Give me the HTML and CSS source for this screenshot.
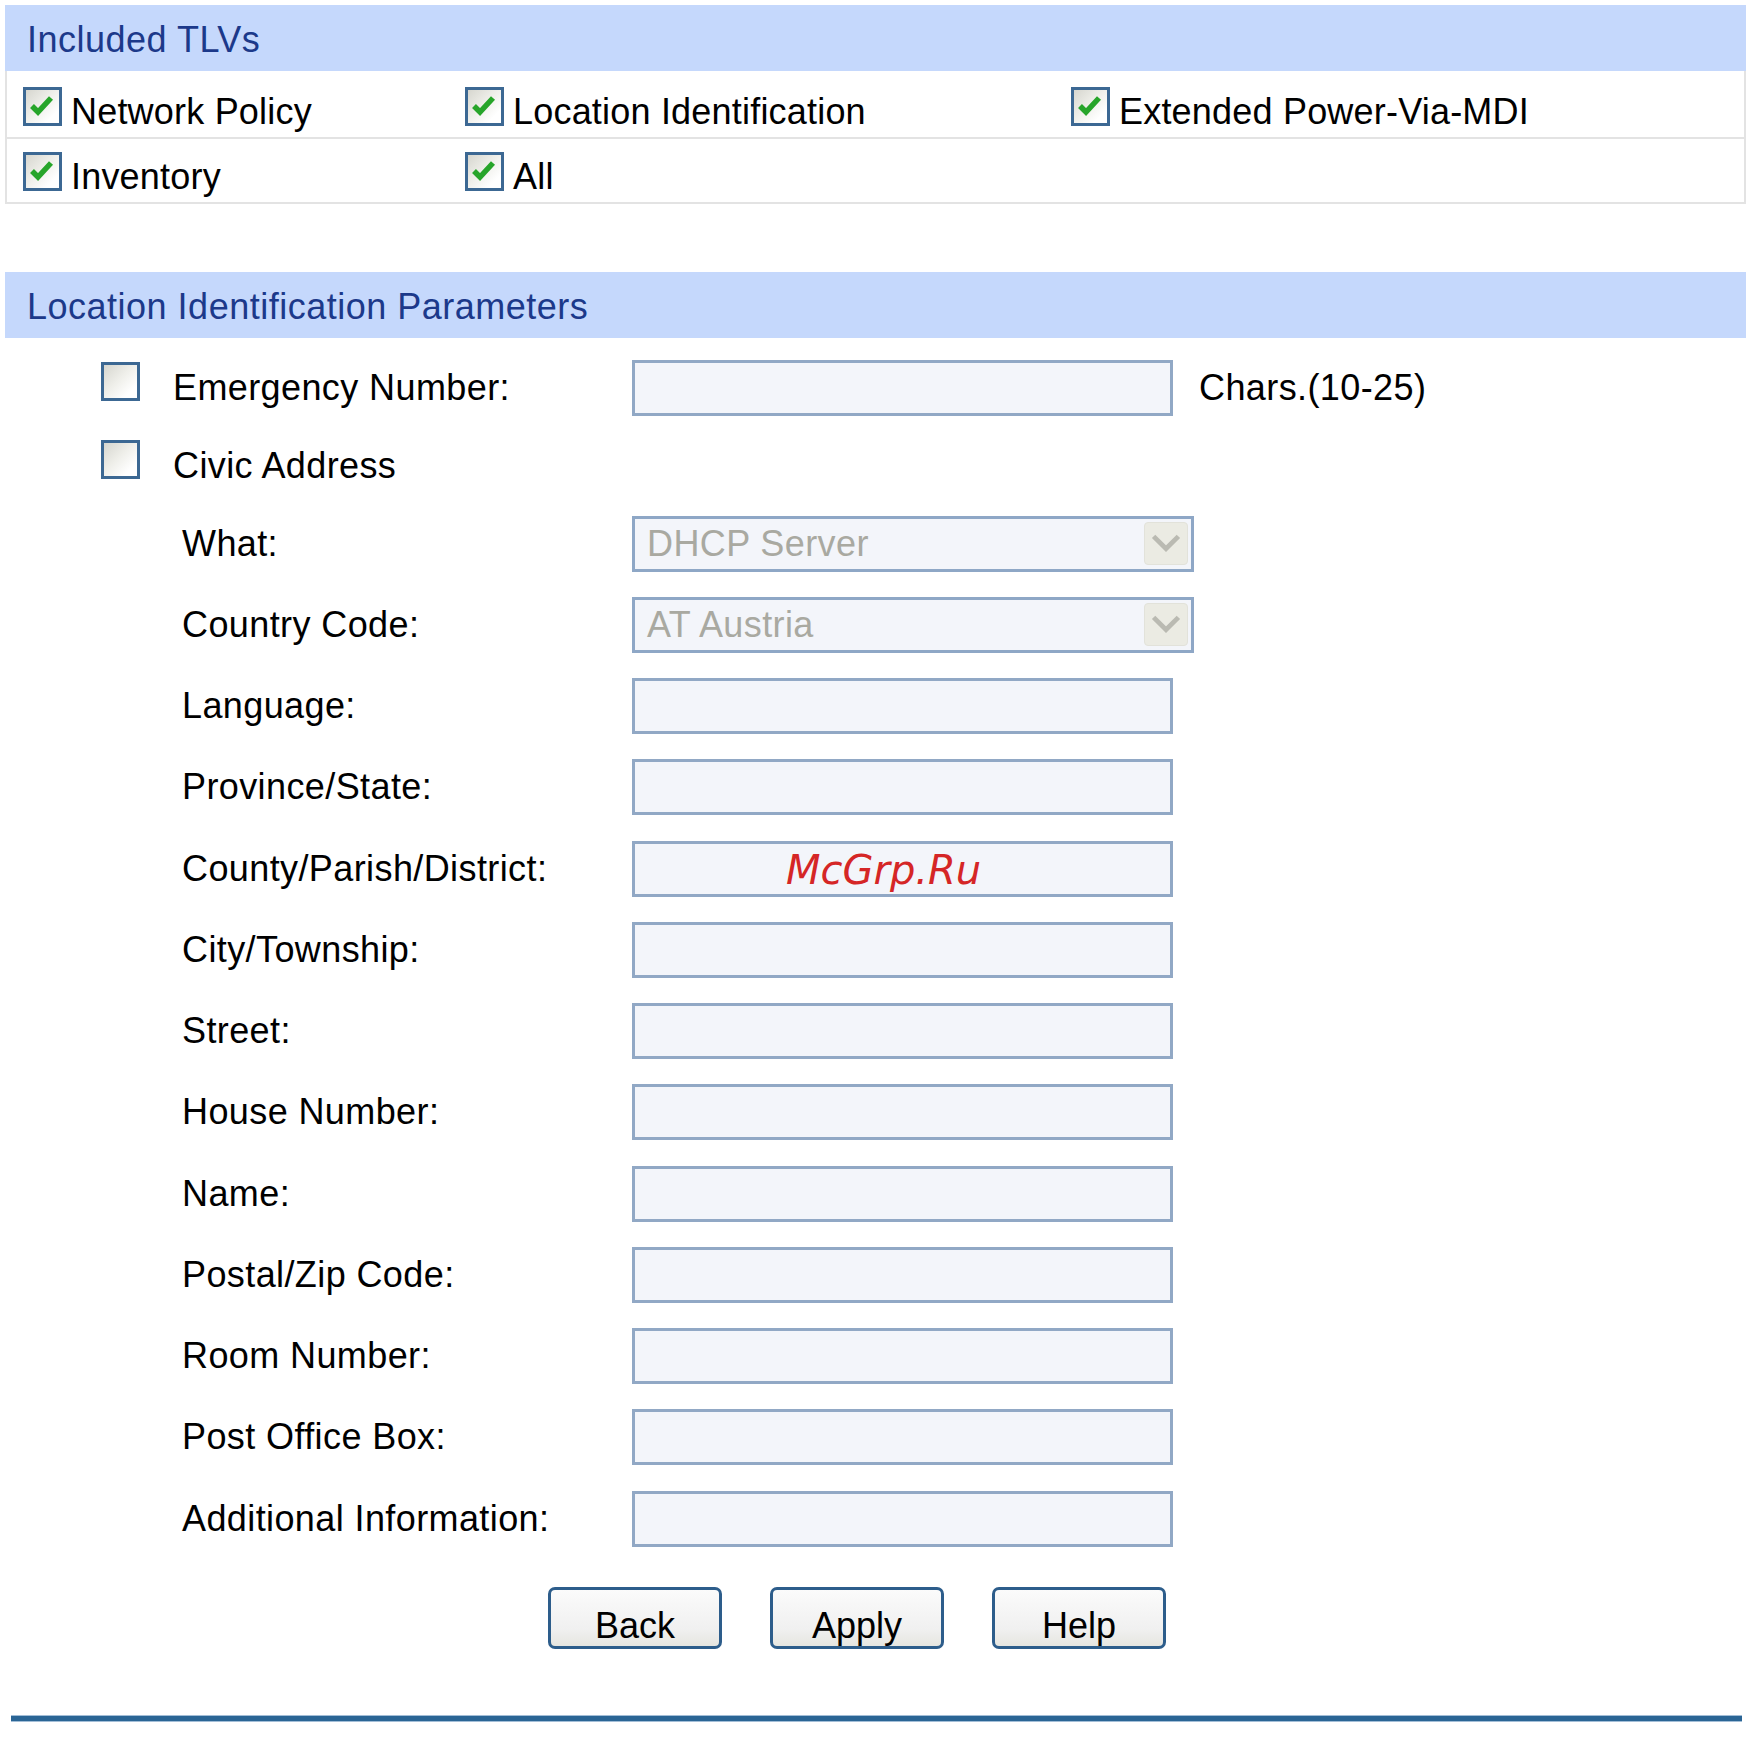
FILE: index.html
```html
<!DOCTYPE html>
<html lang="en">
<head>
<meta charset="utf-8">
<title>Location Identification</title>
<link rel="stylesheet" href="styles.css">
</head>
<body>
<div class="page">
  <section class="sec">
    <div class="hdr">Included TLVs</div>
    <div class="tlv">
      <div class="tlv-row">
        <label class="chk"><span class="cb on"><svg viewBox="0 0 33 33"><path d="M6 16 L12 22 L25 8"/></svg></span><span class="t">Network Policy</span></label>
        <label class="chk"><span class="cb on"><svg viewBox="0 0 33 33"><path d="M6 16 L12 22 L25 8"/></svg></span><span class="t">Location Identification</span></label>
        <label class="chk"><span class="cb on"><svg viewBox="0 0 33 33"><path d="M6 16 L12 22 L25 8"/></svg></span><span class="t">Extended Power-Via-MDI</span></label>
      </div>
      <div class="tlv-row second">
        <label class="chk"><span class="cb on"><svg viewBox="0 0 33 33"><path d="M6 16 L12 22 L25 8"/></svg></span><span class="t">Inventory</span></label>
        <label class="chk"><span class="cb on"><svg viewBox="0 0 33 33"><path d="M6 16 L12 22 L25 8"/></svg></span><span class="t">All</span></label>
      </div>
    </div>
  </section>

  <section class="sec sec2">
    <div class="hdr">Location Identification Parameters</div>
    <div class="form">
      <div class="frow r-em">
        <span class="cb-slot"><span class="cb"></span></span>
        <span class="lbl">Emergency Number:</span>
        <span class="ctl"><input class="txt" type="text"></span>
        <span class="hint">Chars.(10-25)</span>
      </div>
      <div class="frow r-civic">
        <span class="cb-slot"><span class="cb"></span></span>
        <span class="lbl">Civic Address</span>
      </div>
      <div class="frow">
        <span class="cb-slot"></span>
        <span class="lbl sub">What:</span>
        <span class="ctl"><span class="sel"><span class="sel-val">DHCP Server</span><span class="sel-btn"><svg viewBox="0 0 44 43"><path d="M9 14 L22 27 L35 14"/></svg></span></span></span>
      </div>
      <div class="frow">
        <span class="cb-slot"></span>
        <span class="lbl sub">Country Code:</span>
        <span class="ctl"><span class="sel"><span class="sel-val">AT Austria</span><span class="sel-btn"><svg viewBox="0 0 44 43"><path d="M9 14 L22 27 L35 14"/></svg></span></span></span>
      </div>
      <div class="frow">
        <span class="cb-slot"></span>
        <span class="lbl sub">Language:</span>
        <span class="ctl"><input class="txt" type="text"></span>
      </div>
      <div class="frow">
        <span class="cb-slot"></span>
        <span class="lbl sub">Province/State:</span>
        <span class="ctl"><input class="txt" type="text"></span>
      </div>
      <div class="frow">
        <span class="cb-slot"></span>
        <span class="lbl sub">County/Parish/District:</span>
        <span class="ctl wm-host"><input class="txt" type="text"><span class="wm">McGrp.Ru</span></span>
      </div>
      <div class="frow">
        <span class="cb-slot"></span>
        <span class="lbl sub">City/Township:</span>
        <span class="ctl"><input class="txt" type="text"></span>
      </div>
      <div class="frow">
        <span class="cb-slot"></span>
        <span class="lbl sub">Street:</span>
        <span class="ctl"><input class="txt" type="text"></span>
      </div>
      <div class="frow">
        <span class="cb-slot"></span>
        <span class="lbl sub">House Number:</span>
        <span class="ctl"><input class="txt" type="text"></span>
      </div>
      <div class="frow">
        <span class="cb-slot"></span>
        <span class="lbl sub">Name:</span>
        <span class="ctl"><input class="txt" type="text"></span>
      </div>
      <div class="frow">
        <span class="cb-slot"></span>
        <span class="lbl sub">Postal/Zip Code:</span>
        <span class="ctl"><input class="txt" type="text"></span>
      </div>
      <div class="frow">
        <span class="cb-slot"></span>
        <span class="lbl sub">Room Number:</span>
        <span class="ctl"><input class="txt" type="text"></span>
      </div>
      <div class="frow">
        <span class="cb-slot"></span>
        <span class="lbl sub">Post Office Box:</span>
        <span class="ctl"><input class="txt" type="text"></span>
      </div>
      <div class="frow">
        <span class="cb-slot"></span>
        <span class="lbl sub">Additional Information:</span>
        <span class="ctl"><input class="txt" type="text"></span>
      </div>
    </div>
    <div class="btns">
      <button class="btn" type="button">Back</button>
      <button class="btn" type="button">Apply</button>
      <button class="btn" type="button">Help</button>
    </div>
  </section>
  <div class="rule"></div>
</div>
</body>
</html>
```

FILE: styles.css
```css
html, body {
  margin: 0;
  padding: 0;
  background: #ffffff;
}

body {
  font-family: "Liberation Sans", Arial, sans-serif;
  font-size: 36px;
  letter-spacing: 0.4px;
  color: #000000;
}

.page {
  width: 1741px;
  padding: 5px 0 0 5px;
}

/* section headers */
.hdr {
  height: 66px;
  box-sizing: border-box;
  padding: 15px 0 0 22px;
  line-height: 40px;
  letter-spacing: 0.5px;
  background: #c5d8fc;
  color: #1c398a;
}

/* TLV table */
.tlv {
  border: 2px solid #e3e3e3;
  border-top: 0;
}

.tlv-row {
  display: grid;
  grid-template-columns: 442px 606px 1fr;
  height: 66px;
  box-sizing: border-box;
  padding: 16px 0 0 16px;
}

.tlv-row.second {
  height: 65px;
  padding-top: 13px;
  border-top: 2px solid #e3e3e3;
}

.chk {
  display: flex;
  align-items: flex-start;
  gap: 9px;
  white-space: nowrap;
  letter-spacing: 0.2px;
}

.chk .t {
  display: block;
  padding-top: 5px;
  line-height: 40px;
}

/* checkbox */
.cb {
  display: block;
  flex: none;
  width: 39px;
  height: 39px;
  box-sizing: border-box;
  border: 3px solid #3c6893;
  background: linear-gradient(135deg, #d6d6cf 0%, #efefea 45%, #ffffff 80%);
}

.cb svg {
  display: block;
  width: 33px;
  height: 33px;
}

.cb svg path {
  fill: none;
  stroke: #27a52a;
  stroke-width: 5.5;
  stroke-linecap: butt;
  stroke-linejoin: miter;
}

/* location section */
.sec2 {
  margin-top: 68px;
}

.form {
  padding-top: 10px;
}

.frow {
  display: flex;
  align-items: center;
  height: 81.25px;
}

.frow.r-em {
  height: 80px;
}

.frow.r-civic {
  height: 75px;
}

.cb-slot {
  flex: none;
  width: 72px;
  margin-left: 96px;
  display: flex;
  align-items: center;
}

.cb-slot .cb {
  margin-bottom: 13px;
}

.lbl {
  flex: none;
  width: 459px;
  box-sizing: border-box;
  line-height: 32px;
  white-space: nowrap;
}

.lbl.sub {
  padding-left: 9px;
}

.ctl {
  flex: none;
  display: block;
}

.wm-host {
  position: relative;
}

.txt {
  display: block;
  width: 541px;
  height: 56px;
  box-sizing: border-box;
  margin: 0;
  padding: 0 10px;
  border: 3px solid #91a8c5;
  background: #f3f5fa;
  font: inherit;
  outline: none;
}

.hint {
  margin-left: 26px;
  line-height: 32px;
  white-space: nowrap;
}

/* select look-alike */
.sel {
  display: flex;
  align-items: center;
  width: 562px;
  height: 56px;
  box-sizing: border-box;
  border: 3px solid #8ea7c6;
  background: #f3f5fa;
  padding: 0 3px 0 12px;
}

.sel-val {
  flex: 1;
  color: #a9a9a1;
  line-height: 32px;
  white-space: nowrap;
}

.sel-btn {
  flex: none;
  width: 44px;
  height: 43px;
  box-sizing: border-box;
  border: 1px solid #e2e2da;
  border-radius: 4px;
  background: #ebebe3;
}

.sel-btn svg {
  display: block;
  width: 42px;
  height: 41px;
}

.sel-btn svg path {
  fill: none;
  stroke: #babab2;
  stroke-width: 5;
}

/* watermark overlay */
.wm {
  position: absolute;
  left: 154px;
  top: 9px;
  font-family: "DejaVu Sans", sans-serif;
  font-style: italic;
  font-size: 40px;
  letter-spacing: 0;
  line-height: 40px;
  color: #d52626;
  pointer-events: none;
  white-space: nowrap;
}

/* buttons */
.btns {
  display: flex;
  gap: 48px;
  margin: 28px 0 0 543px;
}

.btn {
  width: 174px;
  height: 62px;
  box-sizing: border-box;
  margin: 0;
  padding: 15px 0 0;
  border: 3px solid #2d5d8b;
  border-radius: 7px;
  background: linear-gradient(#fbfbfb, #f0f0f0 70%, #e6e6e0);
  font: inherit;
  line-height: 32px;
  color: #000000;
  text-align: center;
}

/* bottom rule */
.rule {
  margin: 66px 0 0 6px;
  width: 1731px;
  height: 5px;
  background: #2a6595;
  border-top: 1px solid #a3bed7;
  border-bottom: 1px solid #a3bed7;
}
```
